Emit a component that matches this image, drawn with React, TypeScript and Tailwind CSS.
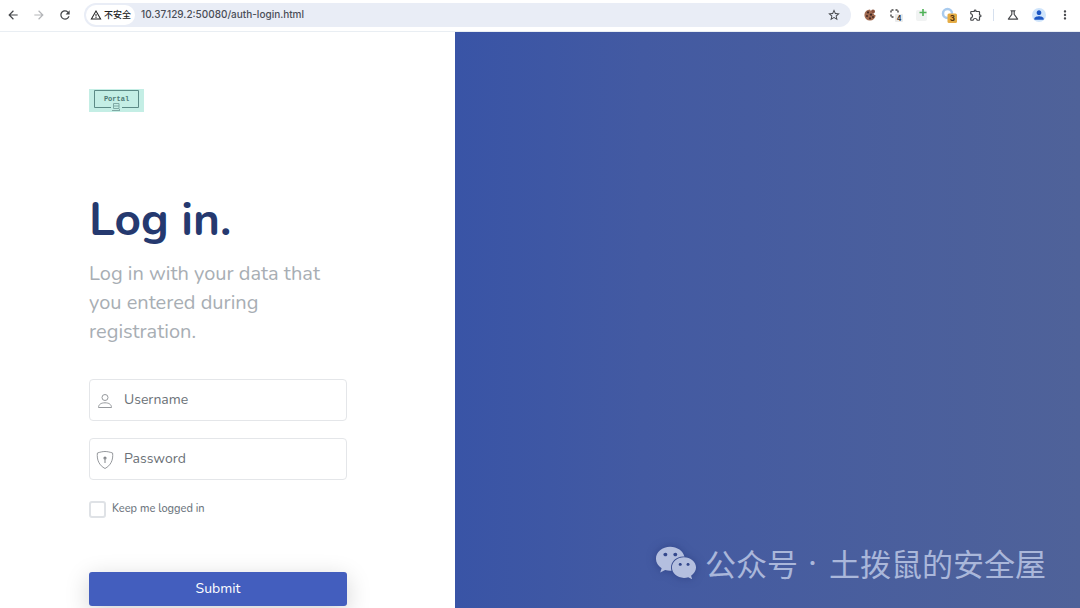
import type { ReactNode } from "react";
import { FaWeixin } from "react-icons/fa";
import {
  MdArrowBack,
  MdArrowForward,
  MdMoreVert,
  MdOutlineExtension,
  MdOutlineScience,
  MdPerson,
  MdRefresh,
  MdStarBorder,
  MdWarningAmber,
} from "react-icons/md";

function CookieIcon() {
  return (
    <svg viewBox="0 0 12 12" className="w-3.5 h-3.5 p-px">
      <path d="M6 .4a5.600 5.600 0 1 0 5.600 5.800 2 2 0 0 1-2-1.700A2.200 2.200 0 0 1 7.400 2.100 2 2 0 0 1 6 .4Z" fill="#a0694f" />
      <circle cx="9" cy="2.600" r="2" fill="#8a513c" />
      <circle cx="4" cy="3.400" r="1.100" fill="#452a25" />
      <circle cx="7" cy="5.600" r="1.200" fill="#452a25" />
      <circle cx="3" cy="6.900" r="1" fill="#452a25" />
      <circle cx="6" cy="9.300" r="1.100" fill="#452a25" />
      <circle cx="9" cy="8" r="1" fill="#452a25" />
    </svg>
  );
}

function CaptureIcon() {
  return (
    <svg viewBox="0 0 14 14" className="w-3.5 h-3.5">
      <path d="M2 4.500V2h2.500M6.500 2H9v2.500M2 6.500V9h2.500" fill="none" stroke="#444" strokeWidth="1.400" strokeDasharray="2 1" />
      <rect x="6" y="6" width="8" height="8" rx="1" fill="#e9eaeb" />
      <text x="10" y="13" textAnchor="middle" fontSize="7" fontWeight="700" fill="#333" fontFamily="Inter, sans-serif">4</text>
    </svg>
  );
}

function PlusIcon() {
  return (
    <svg viewBox="0 0 14 14" className="w-3.5 h-3.5">
      <rect x="1" y="2" width="11" height="11" rx="2" fill="#f1f3f3" />
      <path d="M8 1v7M4.500 4.500h7" stroke="#4fb257" strokeWidth="1.600" />
    </svg>
  );
}

function RingIcon() {
  return (
    <svg viewBox="0 0 16 16" className="w-4 h-4">
      <circle cx="6.500" cy="6.500" r="4.500" fill="none" stroke="#a9cbee" strokeWidth="2.500" />
      <rect x="6.500" y="6.500" width="9.500" height="9.500" rx="1.500" fill="#e5ac45" />
      <text x="11.300" y="14" textAnchor="middle" fontSize="8" fontWeight="700" fill="#51310c" fontFamily="Inter, sans-serif">3</text>
    </svg>
  );
}

function BrowserBar() {
  return (
    <header className="flex items-center h-8 pb-0.5 pl-1.5 pr-2 bg-white border-b border-[#e9eef3] text-[#45474b]">
      <div className="flex items-center gap-3 mr-3">
        <button aria-label="Back"><MdArrowBack size={14} /></button>
        <button aria-label="Forward" className="text-[#b3b5b8]"><MdArrowForward size={14} /></button>
        <button aria-label="Reload"><MdRefresh size={14} /></button>
      </div>
      <div className="flex items-center flex-1 h-6 pl-0.5 pr-2.5 rounded-full bg-[#e9edf6]">
        <button className="flex items-center gap-0.5 h-5 px-1 rounded-full bg-white text-[#222]">
          <MdWarningAmber size={12} />
          <span className="font-['Noto_Sans_CJK_SC',sans-serif] text-[9px] font-medium">不安全</span>
        </button>
        <input
          aria-label="Address"
          defaultValue="10.37.129.2:50080/auth-login.html"
          className="flex-1 min-w-0 ml-1.5 bg-transparent outline-none font-[Inter,sans-serif] text-[10px] font-medium text-[#4a4e56]"
        />
        <button aria-label="Bookmark"><MdStarBorder size={14} /></button>
      </div>
      <div className="flex items-center gap-3 ml-3">
        <button aria-label="Cookies"><CookieIcon /></button>
        <button aria-label="Capture"><CaptureIcon /></button>
        <button aria-label="Add"><PlusIcon /></button>
        <button aria-label="Tasks"><RingIcon /></button>
        <button aria-label="Extensions"><MdOutlineExtension size={14} /></button>
      </div>
      <span className="w-px h-3 ml-2.5 mr-3 bg-[#d6e0ee]" />
      <div className="flex items-center gap-3">
        <button aria-label="Labs"><MdOutlineScience size={14} /></button>
        <button aria-label="Profile" className="flex items-center justify-center w-3.5 h-3.5 rounded-full bg-[#cfe4fb] text-[#1c56c4]">
          <MdPerson size={14} />
        </button>
        <button aria-label="Menu"><MdMoreVert size={14} /></button>
      </div>
    </header>
  );
}

function Logo() {
  return (
    <svg viewBox="0 0 55 23" className="w-[55px] h-[23px]">
      <rect width="55" height="23" fill="#c4eee5" />
      <path d="M22 18.500H5.500v-17h44v17H33" fill="none" stroke="#5c8a86" />
      <text x="27.500" y="12" textAnchor="middle" fontSize="7" fontWeight="700" fill="#4d7976" fontFamily="Liberation Mono, monospace">Portal</text>
      <path d="M24.500 14.500h5.500v5h-5.500zM24 17h6M23 21.500h8M29 19l2 2" fill="none" stroke="#7fa9a4" />
    </svg>
  );
}

function PersonIcon() {
  return (
    <svg viewBox="0 0 18 18" className="w-[18px] h-[18px]" fill="none" stroke="#96999d">
      <circle cx="9" cy="5.500" r="3" />
      <path d="M2.500 15.500c0-3 2.500-4.700 6.500-4.700s6.500 1.700 6.500 4.700Z" strokeLinejoin="round" />
    </svg>
  );
}

function ShieldIcon() {
  return (
    <svg viewBox="0 0 18 20" className="w-[18px] h-5" fill="none" stroke="#96999d">
      <path d="M9 1.500c2.400 0 5.200.7 7.600 1.500.8 7-1.900 12.500-7.600 15.500C3.300 15.500.6 10 1.400 3 3.800 2.200 6.600 1.500 9 1.500Z" strokeLinejoin="round" />
      <circle cx="9" cy="8" r="1.600" fill="#85888c" stroke="none" />
      <path d="M9 8v5" strokeWidth="1.200" />
    </svg>
  );
}

function Field({ icon, label, type }: { icon: ReactNode; label: string; type: string }) {
  return (
    <label className="flex items-center h-[42px] px-1.5 gap-2.5 bg-white border border-[#e4e6e9] rounded-sm">
      <span className="pt-0.5">{icon}</span>
      <input
        type={type}
        aria-label={label}
        placeholder={label}
        className="flex-1 min-w-0 bg-transparent outline-none text-sm placeholder:text-[#6b7177]"
      />
    </label>
  );
}

export default function App() {
  return (
    <div className="flex flex-col h-screen overflow-hidden bg-white font-['Nunito','Open_Sans',sans-serif]">
      <BrowserBar />
      <div className="flex-1 min-h-0 grid grid-cols-[455fr_625fr]">
        <main className="min-h-0 overflow-hidden pl-[89px] pr-[108px] pt-[57px]">
          <a href="#" aria-label="Portal" className="block w-fit mb-20">
            <Logo />
          </a>
          <h1 className="text-[46px] leading-[56px] font-bold text-[#25396f]">Log in.</h1>
          <p className="mt-[11px] text-xl leading-[29px] text-[#a8aeb4]">
            Log in with your data that you entered during registration.
          </p>
          <form className="mt-[33px]" onSubmit={(e) => e.preventDefault()}>
            <div className="flex flex-col gap-[17px]">
              <Field icon={<PersonIcon />} label="Username" type="text" />
              <Field icon={<ShieldIcon />} label="Password" type="password" />
            </div>
            <label className="flex items-center gap-1.5 mt-5 text-[11px] leading-[18px] font-medium text-[#6c757d]">
              <input
                type="checkbox"
                className="appearance-none w-[17px] h-[17px] border-2 border-[#dfe2e6] rounded-[3px] checked:bg-[#435ebe]"
              />
              Keep me logged in
            </label>
            <button
              type="submit"
              className="block w-full h-[34px] mt-[54px] rounded-[3px] bg-[#435ebe] text-sm text-white shadow-[0_6px_24px_rgba(0,0,0,0.18)]"
            >
              Submit
            </button>
          </form>
        </main>
        <aside className="flex items-end justify-end pr-[34px] pb-[22px] bg-linear-to-r from-[#3954a6] via-[#435aa2] via-30% to-[#4f6299]">
          <div className="flex items-center text-[31px] leading-[46px] text-[#aab7da] font-['Noto_Sans_CJK_SC',sans-serif]">
            <FaWeixin size={42} className="mr-2 text-[#b4bfdf] drop-shadow-[0_0_4px_rgba(30,45,110,0.5)]" />
            <span>公众号</span>
            <span className="ml-2.5 mr-3 font-[Inter,sans-serif]">·</span>
            <span>土拨鼠的安全屋</span>
          </div>
        </aside>
      </div>
    </div>
  );
}
